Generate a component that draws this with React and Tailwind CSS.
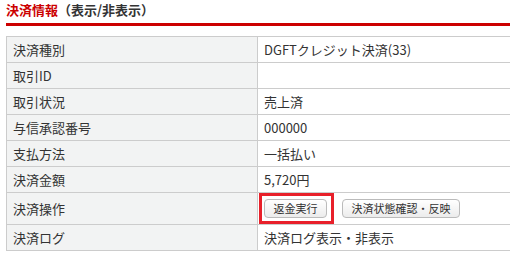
export default function App() {
  const rows = [
    ['決済種別', 'DGFTクレジット決済(33)'],
    ['取引ID', ''],
    ['取引状況', '売上済'],
    ['与信承認番号', '000000'],
    ['支払方法', '一括払い'],
    ['決済金額', '5,720円'],
  ]

  return (
    <div
      className="w-[510px] h-[279px] bg-white overflow-hidden text-[#333] text-[13px]"
      style={{ fontFamily: '"Noto Sans CJK JP", "Noto Sans", sans-serif' }}
    >
      <div className="pl-[6px] pt-[1px]">
        <h2 className="font-bold text-[13px] leading-[18px]">
          <span className="text-[#c00]">決済情報</span>
          <span>（表示/非表示）</span>
        </h2>
        <div className="mt-[4px] h-[3px] bg-[#c00]" />

        <table className="mt-[10px] w-[520px] border-collapse">
          <tbody>
            {rows.map(([label, value]) => (
              <tr key={label} className="h-[26px]">
                <th className="w-[251px] bg-[#f2f3f3] border border-[#ccc] px-[6px] text-left font-normal leading-[18px]">
                  {label}
                </th>
                <td className="border border-[#ccc] px-[6px] leading-[18px]">{value}</td>
              </tr>
            ))}
            <tr className="h-[32px]">
              <th className="bg-[#f2f3f3] border border-[#ccc] px-[6px] text-left font-normal">
                決済操作
              </th>
              <td className="border border-[#ccc] pl-[1px] py-0">
                <div className="flex items-center gap-[8px]">
                  <div className="border-[3px] border-[#e8202a] pl-[2px] pr-[4px] py-[3px]">
                    <button className="block h-[19px] w-[63px] rounded-[4px] border border-[#bbb] bg-gradient-to-b from-white to-[#ececec] text-[11px] leading-[17px] text-[#333]">
                      返金実行
                    </button>
                  </div>
                  <button className="h-[19px] w-[118px] rounded-[4px] border border-[#bbb] bg-gradient-to-b from-white to-[#ececec] text-[11px] leading-[17px] text-[#333]">
                    決済状態確認・反映
                  </button>
                </div>
              </td>
            </tr>
            <tr className="h-[26px]">
              <th className="bg-[#f2f3f3] border border-[#ccc] px-[6px] text-left font-normal leading-[18px]">
                決済ログ
              </th>
              <td className="border border-[#ccc] px-[6px] leading-[18px]">決済ログ表示・非表示</td>
            </tr>
          </tbody>
        </table>
      </div>
    </div>
  )
}
